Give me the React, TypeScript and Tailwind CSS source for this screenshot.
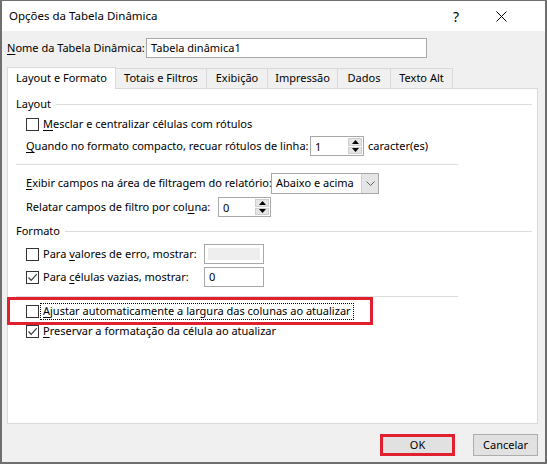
import React from 'react';

const font = "font-['Segoe_UI','Noto_Sans',sans-serif] text-[11px] text-black whitespace-nowrap";

function Check({ checked = false }: { checked?: boolean }) {
  return (
    <div className="w-[13px] h-[13px] border border-[#333333] bg-white shrink-0 flex items-center justify-center">
      {checked && (
        <svg width="11" height="11" viewBox="0 0 11 11">
          <path d="M1.5 5.5 L4.2 8.3 L9.8 2.2" fill="none" stroke="#3a3a3a" strokeWidth="1.2" />
        </svg>
      )}
    </div>
  );
}

function Spin({ value, width }: { value: string; width: string }) {
  return (
    <div className={`${width} h-[20px] border border-[#a8a8a8] bg-white flex shrink-0`}>
      <div className="flex-1 pl-[4px] flex items-center leading-none">{value}</div>
      <div className="w-[16px] flex flex-col p-px gap-px">
        <div className="flex-1 bg-[#e5e5e5] border border-[#cfcfcf] flex items-center justify-center">
          <svg width="7" height="4" viewBox="0 0 7 4"><path d="M0 4 L3.5 0 L7 4 Z" fill="#000" /></svg>
        </div>
        <div className="flex-1 bg-[#e5e5e5] border border-[#cfcfcf] flex items-center justify-center">
          <svg width="7" height="4" viewBox="0 0 7 4"><path d="M0 0 L3.5 4 L7 0 Z" fill="#000" /></svg>
        </div>
      </div>
    </div>
  );
}

function Acc({ k }: { k: string }) {
  return <span className="underline underline-offset-[2px]">{k}</span>;
}

function SectionHead({ title }: { title: string }) {
  return (
    <div className="h-[16px] flex items-center pl-[8px] pr-[5px]">
      <span>{title}</span>
      <div className="flex-1 h-px bg-[#dcdcdc] ml-[5px]" />
    </div>
  );
}

function CheckRow({ checked, children, className = '' }: { checked?: boolean; children: React.ReactNode; className?: string }) {
  return (
    <div className={`flex items-center pl-[18px] gap-[4px] ${className}`}>
      <Check checked={checked} />
      {children}
    </div>
  );
}

const tabs = [
  { label: 'Totais e Filtros', w: 'w-[92px]' },
  { label: 'Exibição', w: 'w-[62px]' },
  { label: 'Impressão', w: 'w-[71px]' },
  { label: 'Dados', w: 'w-[54px]' },
  { label: 'Texto Alt', w: 'w-[63px]' },
];

export default function App() {
  return (
    <div className={`${font} relative w-[547px] h-[464px] border-t border-x-2 border-b-2 border-[#6f6f6f] flex flex-col`}>
      {/* title bar */}
      <div className="h-[30px] bg-white flex items-center pl-[7px]">
        <span className="flex-1 text-[11.5px]">Opções da Tabela Dinâmica</span>
        <span className="text-[14px] w-[10px] mr-[33px]">?</span>
        <svg width="11" height="11" viewBox="0 0 11 11" className="mr-[38px]">
          <path d="M0.5 0.5 L10.5 10.5 M10.5 0.5 L0.5 10.5" stroke="#000" strokeWidth="1" />
        </svg>
      </div>

      <div className="flex-1 bg-[#f0f0f0] flex flex-col pt-[7px]">
        {/* name */}
        <div className="h-[20px] flex items-center pl-[5px]">
          <span className="w-[139px]"><Acc k="N" />ome da Tabela Dinâmica:</span>
          <div className="w-[281px] h-[20px] border border-[#a8a8a8] bg-white flex items-center pl-[4px]">Tabela dinâmica1</div>
        </div>

        {/* tabs */}
        <div className="h-[21px] mt-[9px] ml-[5px] flex items-end">
          <div className="relative z-10 w-[109px] h-[22px] -mb-px bg-white border border-b-0 border-[#d9d9d9] flex items-center justify-center">
            Layout e Formato
          </div>
          {tabs.map((t) => (
            <div key={t.label} className={`${t.w} h-[20px] -ml-px border border-b-0 border-[#d9d9d9] bg-[#f0f0f0] flex items-center justify-center`}>
              {t.label}
            </div>
          ))}
        </div>

        {/* panel */}
        <div className="ml-[5px] w-[531px] h-[336px] bg-white border border-[#d9d9d9] flex flex-col pt-[7px]">
          <SectionHead title="Layout" />
          <CheckRow className="h-[16px] mt-[4px]">
            <span><Acc k="M" />esclar e centralizar células com rótulos</span>
          </CheckRow>
          <div className="h-[20px] mt-[4px] pl-[18px] flex items-center">
            <span className="w-[284px]"><Acc k="Q" />uando no formato compacto, recuar rótulos de linha:</span>
            <Spin value="1" width="w-[54px]" />
            <span className="ml-[4px]">caracter(es)</span>
          </div>
          <div className="ml-[8px] w-[442px] h-px bg-[#dcdcdc] mt-[8px]" />
          <div className="h-[20px] mt-[8px] pl-[18px] flex items-center">
            <span className="w-[245px]"><Acc k="E" />xibir campos na área de filtragem do relatório:</span>
            <div className="w-[108px] h-[21px] border border-[#a8a8a8] bg-white flex shrink-0">
              <div className="flex-1 flex items-center pl-[4px]">Abaixo e acima</div>
              <div className="w-[17px] bg-[#e5e5e5] border-l border-[#cfcfcf] flex items-center justify-center">
                <svg width="9" height="5" viewBox="0 0 9 5"><path d="M0.5 0.5 L4.5 4.5 L8.5 0.5" fill="none" stroke="#606060" strokeWidth="1" /></svg>
              </div>
            </div>
          </div>
          <div className="h-[20px] mt-[4px] pl-[18px] flex items-center">
            <span className="w-[192px]">Relatar campos de filtro por col<Acc k="u" />na:</span>
            <Spin value="0" width="w-[53px]" />
          </div>

          <div className="mt-[6px]">
            <SectionHead title="Formato" />
          </div>
          <CheckRow className="h-[20px] mt-[5px]">
            <span className="w-[157px]">Para <Acc k="v" />alores de erro, mostrar:</span>
            <div className="w-[60px] h-[20px] border border-[#a8a8a8] bg-white p-[3px] shrink-0">
              <div className="w-full h-full bg-[#eeeeee]" />
            </div>
          </CheckRow>
          <CheckRow checked className="h-[20px] mt-[3px]">
            <span className="w-[157px]">Para <Acc k="c" />élulas vazias, mostrar:</span>
            <div className="w-[60px] h-[20px] border border-[#a8a8a8] bg-white flex items-center pl-[4px] shrink-0">0</div>
          </CheckRow>
          <div className="ml-[8px] w-[442px] h-px bg-[#dcdcdc] mt-[9px]" />
          <div className="h-[17px] mt-[6px] pl-[18px] flex items-center gap-px">
            <Check />
            <span className="border border-dotted border-black px-[2px] h-[17px] flex items-center">
              <Acc k="A" />justar automaticamente a largura das colunas ao atualizar
            </span>
          </div>
          <CheckRow checked className="h-[16px] mt-[3px]">
            <span><Acc k="P" />reservar a formatação da célula ao atualizar</span>
          </CheckRow>
        </div>

        {/* buttons */}
        <div className="mt-[10px] flex justify-end pr-[7px] gap-[18px]">
          <button className="w-[75px] h-[22px] border-[3px] border-[#e0202e] bg-[#e1e1e1] flex items-center justify-center">OK</button>
          <button className="w-[65px] h-[22px] border border-[#adadad] bg-[#e1e1e1] flex items-center justify-center">Cancelar</button>
        </div>
      </div>

      {/* highlight around the auto-fit option */}
      <div className="absolute left-[5px] top-[296px] w-[366px] h-[28px] border-[3px] border-[#e0202e] pointer-events-none" />
    </div>
  );
}
